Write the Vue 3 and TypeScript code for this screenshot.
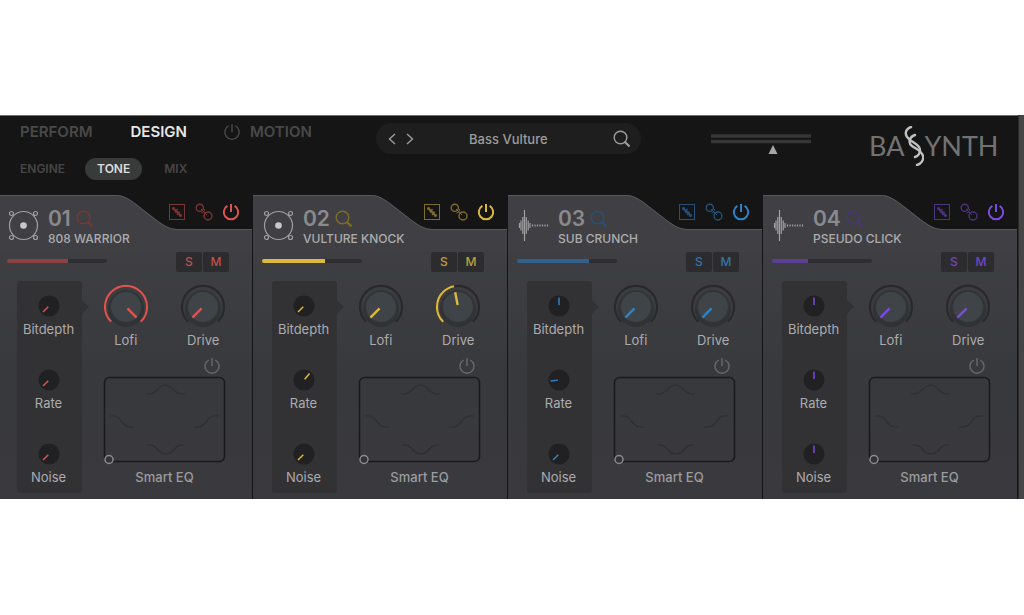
<script setup lang="ts">
import { ref } from 'vue'

interface Dial {
  label: string
  value: number
}

interface Channel {
  id: string
  name: string
  kind: 'drum' | 'wave'
  tone: string
  level: number
  side: Dial[]
  main: Dial[]
}

const preset = ref('Bass Vulture')
const master = ref(62)

const channels = ref<Channel[]>([
  {
    id: '01', name: '808 WARRIOR', kind: 'drum', tone: 'red', level: 61,
    side: [{ label: 'Bitdepth', value: 0 }, { label: 'Rate', value: 0 }, { label: 'Noise', value: 0 }],
    main: [{ label: 'Lofi', value: 100 }, { label: 'Drive', value: 0 }],
  },
  {
    id: '02', name: 'VULTURE KNOCK', kind: 'drum', tone: 'yellow', level: 63,
    side: [{ label: 'Bitdepth', value: 0 }, { label: 'Rate', value: 65 }, { label: 'Noise', value: 0 }],
    main: [{ label: 'Lofi', value: 0 }, { label: 'Drive', value: 46 }],
  },
  {
    id: '03', name: 'SUB CRUNCH', kind: 'wave', tone: 'blue', level: 72,
    side: [{ label: 'Bitdepth', value: 50 }, { label: 'Rate', value: 14 }, { label: 'Noise', value: 0 }],
    main: [{ label: 'Lofi', value: 0 }, { label: 'Drive', value: 0 }],
  },
  {
    id: '04', name: 'PSEUDO CLICK', kind: 'wave', tone: 'purple', level: 36,
    side: [{ label: 'Bitdepth', value: 50 }, { label: 'Rate', value: 50 }, { label: 'Noise', value: 50 }],
    main: [{ label: 'Lofi', value: 0 }, { label: 'Drive', value: 0 }],
  },
])

const turn = (value: number): string => `rotate(${-135 + value * 2.7} 24 24)`
const turnSmall = (value: number): string => `rotate(${-135 + value * 2.7} 11 11)`
</script>

<template>
  <div class="page">
    <main class="synth">
      <div class="face">
        <header class="top">
          <nav class="menus">
            <div class="tabs">
              <button type="button" class="tab perform">PERFORM</button>
              <button type="button" class="tab design">DESIGN</button>
              <button type="button" class="tab motion">
                <svg width="18" height="18" viewBox="0 0 18 18" aria-hidden="true">
                  <path d="M5.6 2.8A7.2 7.2 0 1 0 12.4 2.8M9 1V9" class="line" />
                </svg>
                MOTION
              </button>
            </div>
            <div class="subtabs">
              <button type="button" class="sub">ENGINE</button>
              <button type="button" class="sub on">TONE</button>
              <button type="button" class="sub">MIX</button>
            </div>
          </nav>

          <div class="preset">
            <button type="button" class="step" aria-label="Previous preset">
              <svg width="8" height="12" viewBox="0 0 8 12"><path d="M7 1L1.500 6L7 11" class="line" /></svg>
            </button>
            <button type="button" class="step" aria-label="Next preset">
              <svg width="8" height="12" viewBox="0 0 8 12"><path d="M1 1L6.500 6L1 11" class="line" /></svg>
            </button>
            <button type="button" class="preset-name">{{ preset }}</button>
            <button type="button" class="step" aria-label="Search presets">
              <svg width="18" height="18" viewBox="0 0 18 18">
                <circle cx="7.500" cy="7.500" r="6.300" class="line" />
                <path d="M11.500 11.500L16.500 16.500" class="line heavy" />
              </svg>
            </button>
          </div>

          <label class="master">
            <input v-model.number="master" type="range" class="quiet" aria-label="Master volume">
            <svg width="100" height="22" viewBox="0 0 100 22" aria-hidden="true">
              <path d="M0 2H100M0 7.500H100" class="rail" />
              <path d="M0 -4L4.500 5H-4.500Z" class="mark" :transform="`translate(${master} 15)`" />
            </svg>
          </label>

          <div class="brand">
            <span>BA</span>
            <svg width="20" height="40" viewBox="0 0 20 40" aria-hidden="true">
              <path d="M7 1C1 3 0 9 5 13C9 17 16 19 16 24C16 28 14 30 11 31" />
              <path d="M11 9C5 11 4 17 8 20C12 23 18 25 19 30C20 34 17 38 13 39" />
            </svg>
            <span>YNTH</span>
          </div>
        </header>

        <div class="channels">
          <section v-for="c in channels" :key="c.id" class="channel" :class="c.tone">
            <div class="head">
              <svg class="shape" viewBox="0 0 255 57" preserveAspectRatio="none" aria-hidden="true">
                <path d="M0 0H119C125 0 130 3 136 7L158 24C166 30 172 34 180 34H255V57H0Z" class="fill" />
                <path d="M0 .5H119C125 .5 130 3.500 136 7.500L158 24.500C166 30.500 172 34.500 180 34.500H255" class="edge" />
              </svg>
              <div class="ident">
                <svg v-if="c.kind === 'drum'" class="source" width="31" height="31" viewBox="0 0 31 31" aria-hidden="true">
                  <circle cx="15.500" cy="15.500" r="14" />
                  <circle cx="15.500" cy="15.500" r="3.300" class="solid" />
                  <circle cx="3.500" cy="3.500" r="2" />
                  <circle cx="27.500" cy="3.500" r="2" />
                  <circle cx="3.500" cy="27.500" r="2" />
                  <circle cx="27.500" cy="27.500" r="2" />
                </svg>
                <svg v-else class="source" width="31" height="31" viewBox="0 0 31 31" aria-hidden="true">
                  <path d="M1.500 13V18M3 10.500V20.500M4.800 7V24M6.500 0V31M8.300 7V24M10.200 10.500V20.500M12 13V18M14.500 14.500V16.500M17 14.500V16.500M19.500 14.500V16.500M22 14.500V16.500M24.500 14.500V16.500M27 14.500V16.500M29.500 14.500V16.500" />
                </svg>
                <div class="titles">
                  <div class="number">
                    <span>{{ c.id }}</span>
                    <button type="button" class="icon dim" :aria-label="`Browse sounds for ${c.name}`">
                      <svg width="18" height="18" viewBox="0 0 18 18">
                        <circle cx="7.500" cy="7.500" r="6.300" class="line" />
                        <path d="M12 12L16.500 16.500" class="line heavy" />
                      </svg>
                    </button>
                  </div>
                  <h2>{{ c.name }}</h2>
                </div>
              </div>
              <div class="tools">
                <button type="button" class="icon dim" aria-label="Randomise">
                  <svg width="18" height="18" viewBox="0 0 18 18">
                    <rect x="1.500" y="1.500" width="15" height="15" class="line thin" />
                    <path d="M4.500 4.500L13.500 13.500" class="line heavy" />
                    <path d="M4.500 6.500L6.500 4.500M7 9.500L9.500 6M9 12L11.500 8.500M11.500 13.500L13.500 11.500" class="line" />
                  </svg>
                </button>
                <button type="button" class="icon dim" aria-label="Link">
                  <svg width="18" height="18" viewBox="0 0 18 18">
                    <circle cx="4.800" cy="4.800" r="3.600" class="line" />
                    <circle cx="13" cy="13" r="4" class="line" />
                    <path d="M6 6L12 12M9.500 6C10 8 9 9.500 6.500 10" class="line thin" />
                  </svg>
                </button>
                <button type="button" class="icon" aria-label="Channel power">
                  <svg width="18" height="18" viewBox="0 0 18 18">
                    <path d="M5.400 2.900A7.200 7.200 0 1 0 12.600 2.900M9 1V9" class="line bold" />
                  </svg>
                </button>
              </div>
            </div>

            <div class="levels">
              <input v-model.number="c.level" type="range" class="meter" :style="{ '--level': c.level + '%' }" :aria-label="`${c.name} level`">
              <div class="pair">
                <button type="button" aria-label="Solo">S</button>
                <button type="button" aria-label="Mute">M</button>
              </div>
            </div>

            <div class="body">
              <div class="strip">
                <label v-for="d in c.side" :key="d.label" class="dial">
                  <input v-model.number="d.value" type="range" class="quiet">
                  <svg width="22" height="22" viewBox="0 0 22 22" aria-hidden="true">
                    <circle cx="11" cy="11" r="10.500" class="cap-small" />
                    <path d="M11 10V2.500" class="hand thin" :transform="turnSmall(d.value)" />
                  </svg>
                  <span>{{ d.label }}</span>
                </label>
              </div>
              <svg class="notch" width="8" height="16" viewBox="0 0 8 16" aria-hidden="true"><path d="M0 1L7 8L0 15Z" /></svg>
              <div class="work">
                <div class="knobs">
                  <label v-for="d in c.main" :key="d.label" class="dial">
                    <input v-model.number="d.value" type="range" class="quiet">
                    <svg width="48" height="48" viewBox="0 0 48 48" aria-hidden="true">
                      <circle cx="24" cy="26" r="18" class="shade" />
                      <circle cx="24" cy="24" r="17" class="rim" />
                      <circle cx="24" cy="24" r="15" class="cap" />
                      <path d="M9.200 38.800A21 21 0 1 1 38.800 38.800" class="track" />
                      <path v-if="d.value > 0" d="M9.200 38.800A21 21 0 1 1 38.800 38.800" pathLength="100" class="arc" :stroke-dasharray="`${d.value} 200`" />
                      <path d="M24 22V9" class="hand" :transform="turn(d.value)" />
                    </svg>
                    <span>{{ d.label }}</span>
                  </label>
                </div>
                <div class="eq">
                  <button type="button" class="icon eq-power" aria-label="Smart EQ power">
                    <svg width="16" height="16" viewBox="0 0 16 16">
                      <path d="M4.800 2A7 7 0 1 0 11.200 2M8 0V8" class="line" />
                    </svg>
                  </button>
                  <svg class="graph" viewBox="0 0 121 85" aria-hidden="true">
                    <rect x=".500" y=".500" width="120" height="84" rx="5" class="frame" />
                    <path d="M42 17H45C53 17 54 8 61.500 8S70 17 78 17H81" class="curve" />
                    <path d="M43 68H46C53 68 54 77 62 77S71 68 77 68H80" class="curve" />
                    <path d="M6 39H10C18 39 17 50 26 50H30" class="curve" />
                    <path d="M90 50H94C103 50 102 39 110 39H115" class="curve" />
                    <circle cx="5" cy="82.500" r="4" class="grip" />
                  </svg>
                  <span>Smart EQ</span>
                </div>
              </div>
            </div>
          </section>
        </div>
      </div>
      <div class="frame-edge"></div>
    </main>
  </div>
</template>

<style>
body {
  background: #fff;
}
</style>

<style scoped>
.page {
  padding: 115px 0;
  font-family: Inter, "Liberation Sans", sans-serif;
  font-size: 13px;
  line-height: 18px;
  color: #acacae;
}

.synth {
  display: flex;
  background: #151515;
}

.face {
  flex: 1;
  min-width: 0;
  overflow: hidden;
  border-top: 1px solid #6e6e6e;
}

.frame-edge {
  width: 5px;
  background: #454545;
  border-left: 1px solid #2a2a2a;
}

button {
  margin: 0;
  padding: 0;
  border: 0;
  background: none;
  font: inherit;
  color: inherit;
  cursor: pointer;
}

svg {
  display: block;
  flex: none;
}

h2 {
  margin: 0;
  font-size: 12px;
  font-weight: 500;
  line-height: 18px;
  white-space: nowrap;
}

.line {
  fill: none;
  stroke: currentColor;
  stroke-width: 1.4;
}

.line.thin {
  stroke-width: 1;
}

.line.bold {
  stroke-width: 2;
}

.line.heavy {
  stroke-width: 2.2;
}

.quiet {
  position: absolute;
  width: 1px;
  height: 1px;
  margin: 0;
  opacity: 0;
}

/* Header */
.top {
  display: grid;
  grid-template-columns: 356fr 335fr 158fr 149fr;
  height: 79px;
  padding-left: 20px;
}

.tabs {
  display: flex;
  align-items: center;
  height: 20px;
  margin-top: 6px;
  font-size: 15px;
  font-weight: 600;
  color: #494949;
}

.tab.design {
  margin-left: 38px;
  color: #e6e6e6;
}

.tab.motion {
  display: flex;
  align-items: center;
  gap: 9px;
  margin-left: 36px;
}

.subtabs {
  display: flex;
  align-items: center;
  height: 22px;
  margin-top: 16px;
  font-size: 12px;
  font-weight: 600;
  color: #464646;
}

.sub + .sub {
  margin-left: 20px;
}

.sub.on {
  height: 22px;
  padding: 0 12px;
  border-radius: 11px;
  background: #393b3b;
  color: #dcdcdc;
}

.sub.on + .sub {
  margin-left: 22px;
}

.preset {
  display: flex;
  align-items: center;
  gap: 10px;
  width: 79%;
  box-sizing: border-box;
  height: 31px;
  margin-top: 7px;
  padding: 0 10px 0 12px;
  border-radius: 16px;
  background: #1e1e1e;
  color: #9c9c9c;
}

.preset-name {
  flex: 1;
  padding-right: 10px;
  font-weight: 500;
}

.master {
  display: block;
  margin-top: 18px;
}

.rail {
  stroke: #363636;
  stroke-width: 3.5;
}

.mark {
  fill: #a6a6a6;
}

.brand {
  display: flex;
  align-items: center;
  height: 40px;
  margin-top: 10px;
  font-family: Lato, "Open Sans", sans-serif;
  font-size: 27px;
  font-weight: 400;
  color: #727272;
}

.brand path {
  fill: none;
  stroke: #c0c0c0;
  stroke-width: 2.4;
  stroke-linecap: round;
}

/* Channels */
.channels {
  display: grid;
  grid-template-columns: repeat(4, minmax(0, 1fr));
  margin-left: -2px;
}

.channel {
  --ink: #dc544f;
  --soft: #783635;
  --bar: #8a4342;
  display: flow-root;
  border-right: 1px solid #141416;
  background: linear-gradient(#151515 0 40px, #404044 40px, #38393c 180px, #3a3a3e);
}

.yellow {
  --ink: #dcb93c;
  --soft: #806c2a;
  --bar: #dcba40;
}

.blue {
  --ink: #2f82c6;
  --soft: #24527a;
  --bar: #31608a;
}

.purple {
  --ink: #7d4ae0;
  --soft: #4b3380;
  --bar: #5d4096;
}

.head {
  display: grid;
  grid-template-columns: minmax(0, 1fr) auto;
  height: 57px;
}

.shape {
  grid-area: 1 / 1 / 2 / 3;
  width: 100%;
  height: 57px;
}

.fill {
  fill: #404044;
}

.edge {
  fill: none;
  stroke: #58585c;
}

.ident {
  grid-area: 1 / 1 / 2 / 3;
  display: flex;
  gap: 9px;
  padding: 15px 0 0 10px;
}

.source {
  fill: none;
  stroke: #a0a0a2;
  stroke-width: 1.2;
}

.solid {
  fill: #c8c8ca;
  stroke: none;
}

.titles {
  margin-top: -2px;
}

.number {
  display: flex;
  align-items: center;
  gap: 5px;
  height: 22px;
  font-size: 21px;
  font-weight: 600;
  color: #8a8a8e;
}

.tools {
  grid-area: 1 / 2;
  display: flex;
  gap: 9px;
  padding: 8px 12px 0 0;
  height: 18px;
}

.icon {
  color: var(--ink);
}

.icon.dim {
  color: var(--soft);
}

.levels {
  display: flex;
  align-items: center;
  justify-content: space-between;
  height: 20px;
  padding: 0 23px 0 9px;
}

.meter {
  appearance: none;
  width: 100px;
  height: 4px;
  margin: 0 0 2px;
  border-radius: 2px;
  background: linear-gradient(90deg, var(--bar) var(--level), #2f2f33 var(--level));
}

.meter::-webkit-slider-thumb {
  appearance: none;
  width: 1px;
  height: 4px;
}

.pair {
  display: flex;
  gap: 1px;
}

.pair button {
  width: 26px;
  height: 20px;
  border-radius: 2px;
  background: #28282b;
  font-size: 12px;
  font-weight: 500;
  color: var(--ink);
  opacity: .8;
}

.body {
  display: flex;
  margin-top: 9px;
  padding: 0 10px 6px 19px;
}

.strip {
  display: flex;
  flex-direction: column;
  gap: 31px;
  width: 65px;
  box-sizing: border-box;
  padding: 14px 2px 7px 0;
  border-radius: 3px;
  background: #323235;
}

.dial {
  display: flex;
  flex-direction: column;
  align-items: center;
}

.strip .dial {
  gap: 3px;
}

.notch {
  margin: 18px -3px 0 0;
  fill: #323235;
}

.cap-small {
  fill: #212123;
}

.hand {
  stroke: var(--ink);
  stroke-width: 2.4;
}

.hand.thin {
  stroke-width: 1.5;
}

.work {
  flex: 1;
  min-width: 0;
  padding-top: 2px;
}

.knobs {
  display: grid;
  grid-template-columns: 1fr 1fr;
}

.shade {
  fill: #313235;
}

.rim {
  fill: #323436;
}

.cap {
  fill: #3e4447;
}

.track,
.arc {
  fill: none;
  stroke: #29292c;
  stroke-width: 2.2;
}

.arc {
  stroke: var(--ink);
}

.eq {
  display: flex;
  flex-direction: column;
  align-items: center;
  padding: 9px 17px 0;
}

.eq-power {
  align-self: flex-end;
  margin: 0 5px 3px 0;
  color: #69696c;
}

.graph {
  width: 100%;
  overflow: visible;
  margin-bottom: 6px;
}

.frame {
  fill: none;
  stroke: #1b1b1d;
  stroke-width: 1.6;
}

.curve {
  fill: none;
  stroke: #2e2e31;
  stroke-width: 1.2;
}

.grip {
  fill: #333336;
  stroke: #8c8c8e;
  stroke-width: 1.5;
}

.eq span {
  font-weight: 500;
  color: #9c9c9f;
}
</style>
